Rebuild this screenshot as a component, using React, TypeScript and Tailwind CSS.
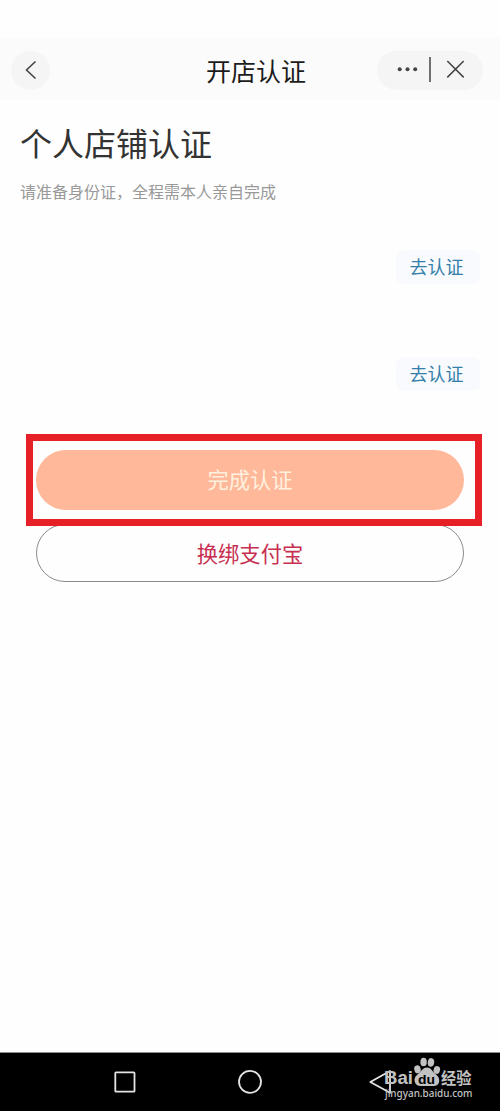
function Header() {
  return (
    <header className="mt-[38px] flex h-[62px] items-center bg-[#fbfbfb] pt-0.5 pr-[17px] pl-[11px]">
      <button className="flex h-[39px] w-[39px] items-center justify-center rounded-full bg-[#f5f5f5]">
        <svg className="h-5 w-3" viewBox="0 0 12 20" fill="none" stroke="#444" strokeWidth="1.6">
          <path d="M10.5 1.5 1.5 10l9 8.5" />
        </svg>
      </button>
      <h1 className="ml-[156px] flex-1 pb-px text-[25px] leading-8 text-[#1c1c1c]">开店认证</h1>
      <div className="flex h-[39px] w-[106px] items-center rounded-full bg-[#f5f5f5]">
        <svg className="h-[39px] w-[106px]" viewBox="0 0 106 39" fill="none" stroke="#444" strokeWidth="1.5">
          <g fill="#444" stroke="none">
            <circle cx="22.7" cy="18.3" r="2" />
            <circle cx="30.5" cy="18.3" r="2" />
            <circle cx="38.2" cy="18.3" r="2" />
          </g>
          <path d="M53 6v25M70.3 10l16.4 16.4M86.7 10 70.3 26.4" />
        </svg>
      </div>
    </header>
  );
}

function VerifyButton() {
  return (
    <button className="h-[34px] w-[84px] rounded-lg bg-[#f8fafd] pr-[3px] pb-[3px] text-[18px] leading-6 text-[#347fa9]">
      去认证
    </button>
  );
}

function Watermark() {
  return (
    <div className="absolute top-[4px] left-[384px] h-[50px] w-[90px] text-[#c2c2c2]">
      <svg className="h-[50px] w-[90px]" viewBox="0 0 90 50" fill="currentColor">
        <ellipse cx="33.5" cy="12.3" rx="3.2" ry="4" transform="rotate(-15 33.5 12.3)" />
        <ellipse cx="39.6" cy="5" rx="3.2" ry="4.3" />
        <ellipse cx="47" cy="5.4" rx="3.2" ry="4.3" transform="rotate(8 47 5.4)" />
        <ellipse cx="52.8" cy="13" rx="3.2" ry="4" transform="rotate(15 52.8 13)" />
        <path d="M43 10.5c-4 0-5.3 3.4-7.8 5.5-3.300 2.600-5.200 4.900-4.500 8.400.6 3.5 3.500 4.800 6.800 4.600h11c3.4.2 6.300-1.3 6.700-4.800.4-3.300-1.700-5.500-4.500-7.900-2.600-2.200-3.800-5.800-7.700-5.800Z" />
        <text x="0" y="26.5" fontSize="18" fontWeight="700" textLength="29" lengthAdjust="spacingAndGlyphs" fontFamily="Liberation Sans, sans-serif">Bai</text>
        <text x="34" y="26.5" fill="#000" fontSize="13" fontWeight="700" textLength="17" lengthAdjust="spacingAndGlyphs" fontFamily="Liberation Sans, sans-serif">du</text>
        <text x="57" y="26.5" fontSize="15.5" fontWeight="700" textLength="30.5" lengthAdjust="spacingAndGlyphs" fontFamily="Noto Sans CJK SC, sans-serif">经验</text>
        <text x="1" y="39.5" fontSize="10" fontWeight="500" textLength="87.5" lengthAdjust="spacingAndGlyphs" fontFamily="Noto Sans, sans-serif">jingyan.baidu.com</text>
      </svg>
    </div>
  );
}

function NavigationBar() {
  return (
    <nav className="relative mt-auto h-[59px] border-t border-[#8d8d8d] bg-black">
      <svg className="h-[58px] w-[500px]" viewBox="0 0 500 58" fill="none" stroke="#e4e4e4" strokeWidth="1.8">
        <rect x="115.3" y="19.3" width="19.2" height="19.4" rx="0.8" />
        <circle cx="250" cy="28.8" r="11" />
        <path d="M370.3 29 390 18v21.8Z" strokeLinejoin="round" />
      </svg>
      <Watermark />
    </nav>
  );
}

export default function App() {
  return (
    <div className="flex h-[1111px] w-[500px] flex-col overflow-hidden bg-[#fefefe] font-['Noto_Sans_CJK_SC',sans-serif]">
      <Header />

      <main>
        <div className="px-5 pt-[19px]">
          <h2 className="text-[32px] leading-[46px] text-[#333]">个人店铺认证</h2>
          <p className="mt-[14px] text-[16px] leading-6 text-[#999]">请准备身份证，全程需本人亲自完成</p>
        </div>

        <div className="mt-[47px] flex flex-col items-end gap-[73px] pr-5">
          <VerifyButton />
          <VerifyButton />
        </div>

        {/* Highlighted action */}
        <div className="relative z-10 mt-[43px] ml-[26px] h-[92px] w-[456px] border-[7px] border-[#e71f26] pt-[9px] pl-[3px]">
          <button className="block h-[60px] w-[428px] rounded-full bg-[#ffb899] pb-[3px] text-[21.3px] leading-[56px] text-[#fff0df]">
            完成认证
          </button>
        </div>
        <button className="-mt-[2px] ml-9 block h-[58px] w-[428px] rounded-full border border-[#8c8c8c] text-[21.3px] leading-[56px] text-[#c72e50]">
          换绑支付宝
        </button>
      </main>

      <NavigationBar />
    </div>
  );
}
